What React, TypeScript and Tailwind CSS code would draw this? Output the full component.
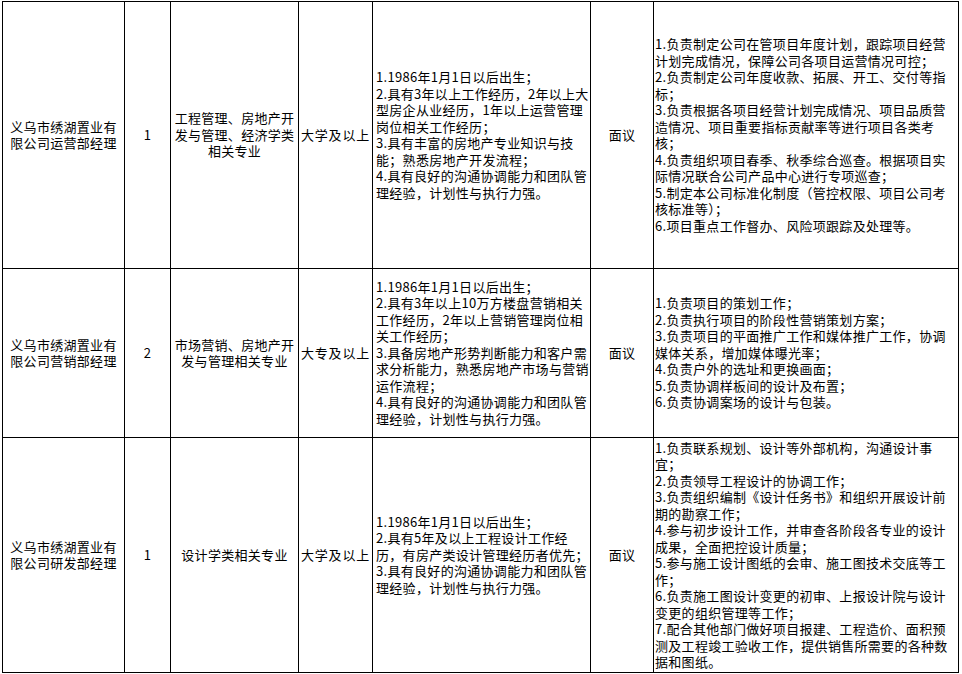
type Row = {
  name: string[];
  count: string;
  major: string[];
  edu: string;
  req: string[];
  pay: string;
  duties: string[];
  height: string;
};

const rows: Row[] = [
  {
    name: ['义乌市绣湖置业有', '限公司运营部经理'],
    count: '1',
    major: ['工程管理、房地产开', '发与管理、经济学类', '相关专业'],
    edu: '大学及以上',
    req: [
      '1.1986年1月1日以后出生；',
      '2.具有3年以上工作经历，2年以上大',
      '型房企从业经历，1年以上运营管理',
      '岗位相关工作经历；',
      '3.具有丰富的房地产专业知识与技',
      '能；熟悉房地产开发流程；',
      '4.具有良好的沟通协调能力和团队管',
      '理经验，计划性与执行力强。',
    ],
    pay: '面议',
    duties: [
      '1.负责制定公司在管项目年度计划，跟踪项目经营',
      '计划完成情况，保障公司各项目运营情况可控；',
      '2.负责制定公司年度收款、拓展、开工、交付等指',
      '标；',
      '3.负责根据各项目经营计划完成情况、项目品质营',
      '造情况、项目重要指标贡献率等进行项目各类考',
      '核；',
      '4.负责组织项目春季、秋季综合巡查。根据项目实',
      '际情况联合公司产品中心进行专项巡查；',
      '5.制定本公司标准化制度（管控权限、项目公司考',
      '核标准等）；',
      '6.项目重点工作督办、风险项跟踪及处理等。',
    ],
    height: 'h-[267px]',
  },
  {
    name: ['义乌市绣湖置业有', '限公司营销部经理'],
    count: '2',
    major: ['市场营销、房地产开', '发与管理相关专业'],
    edu: '大专及以上',
    req: [
      '1.1986年1月1日以后出生；',
      '2.具有3年以上10万方楼盘营销相关',
      '工作经历，2年以上营销管理岗位相',
      '关工作经历；',
      '3.具备房地产形势判断能力和客户需',
      '求分析能力，熟悉房地产市场与营销',
      '运作流程；',
      '4.具有良好的沟通协调能力和团队管',
      '理经验，计划性与执行力强。',
    ],
    pay: '面议',
    duties: [
      '1.负责项目的策划工作；',
      '2.负责执行项目的阶段性营销策划方案；',
      '3.负责项目的平面推广工作和媒体推广工作，协调',
      '媒体关系，增加媒体曝光率；',
      '4.负责户外的选址和更换画面；',
      '5.负责协调样板间的设计及布置；',
      '6.负责协调案场的设计与包装。',
    ],
    height: 'h-[169px]',
  },
  {
    name: ['义乌市绣湖置业有', '限公司研发部经理'],
    count: '1',
    major: ['设计学类相关专业'],
    edu: '大学及以上',
    req: [
      '1.1986年1月1日以后出生；',
      '2.具有5年及以上工程设计工作经',
      '历，有房产类设计管理经历者优先；',
      '3.具有良好的沟通协调能力和团队管',
      '理经验，计划性与执行力强。',
    ],
    pay: '面议',
    duties: [
      '1.负责联系规划、设计等外部机构，沟通设计事',
      '宜；',
      '2.负责领导工程设计的协调工作；',
      '3.负责组织编制《设计任务书》和组织开展设计前',
      '期的勘察工作；',
      '4.参与初步设计工作，并审查各阶段各专业的设计',
      '成果，全面把控设计质量；',
      '5.参与施工设计图纸的会审、施工图技术交底等工',
      '作；',
      '6.负责施工图设计变更的初审、上报设计院与设计',
      '变更的组织管理等工作；',
      '7.配合其他部门做好项目报建、工程造价、面积预',
      '测及工程竣工验收工作，提供销售所需要的各种数',
      '据和图纸。',
    ],
    height: 'h-[235px]',
  },
];

function Lines({ lines }: { lines: string[] }) {
  return (
    <>
      {lines.map((line, i) => (
        <div key={i} className="whitespace-nowrap">
          {line}
        </div>
      ))}
    </>
  );
}

export default function App() {
  return (
    <div
      className="bg-white text-black pl-[2px] pt-[1px] w-[962px] h-[674px] overflow-hidden text-[13px] leading-[16.5px] tracking-[0.3px]"
      style={{ fontFamily: '"Noto Sans CJK SC", "Liberation Sans", sans-serif' }}
    >
      <table className="table-fixed border-collapse w-[956px]">
        <colgroup>
          <col className="w-[122px]" />
          <col className="w-[46px]" />
          <col className="w-[128px]" />
          <col className="w-[74px]" />
          <col className="w-[218px]" />
          <col className="w-[63px]" />
          <col className="w-[305px]" />
        </colgroup>
        <tbody>
          {rows.map((row, i) => (
            <tr key={i} className={row.height}>
              <td className="border border-black align-middle text-center p-0">
                <Lines lines={row.name} />
              </td>
              <td className="border border-black align-middle text-center p-0">{row.count}</td>
              <td className="border border-black align-middle text-center p-0">
                <Lines lines={row.major} />
              </td>
              <td className="border border-black align-middle text-center p-0 whitespace-nowrap tracking-[0.8px]">
                {row.edu}
              </td>
              <td className="border border-black align-middle text-left pl-[3px] pr-0 py-0">
                <Lines lines={row.req} />
              </td>
              <td className="border border-black align-middle text-center p-0">{row.pay}</td>
              <td className="border border-black align-middle text-left pl-[1px] pr-0 py-0">
                <Lines lines={row.duties} />
              </td>
            </tr>
          ))}
        </tbody>
      </table>
    </div>
  );
}
